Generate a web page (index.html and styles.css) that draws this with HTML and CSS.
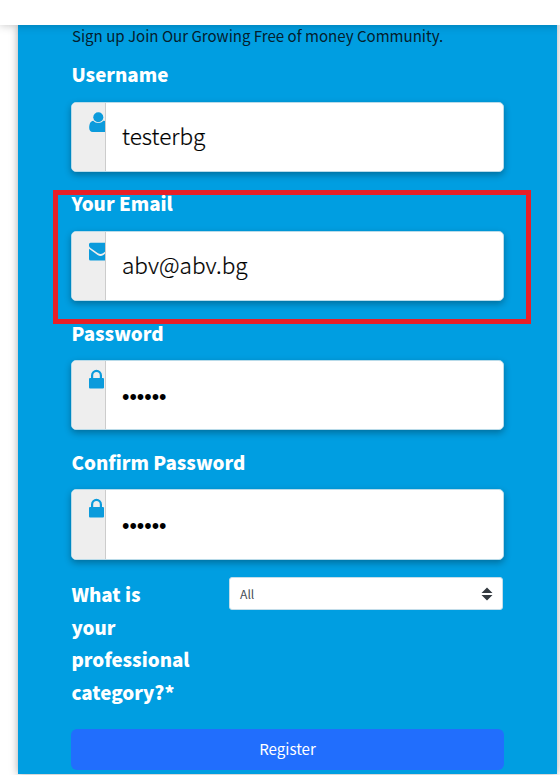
FILE: index.html
```html
<!DOCTYPE html>
<html lang="en">
<head>
<meta charset="utf-8">
<title>Register</title>
<link rel="stylesheet" href="styles.css">
</head>
<body>
<header class="topbar"></header>
<form class="panel">
  <p class="intro"><span>Sign up Join Our Growing Free of money Community.</span></p>
  <label class="label raised" for="user"><span>Username</span></label>
  <div class="field">
    <span class="addon"><svg class="icon" viewBox="0 0 18 20"><circle cx="9.3" cy="5.2" r="5"/><path d="M4.3 8.800C1.500 9 .2 12 .2 16c0 2.300 1.200 4 3.500 4H18V9.500C17 9 16 8.900 14.300 8.800 13 10.200 11.300 11 9.300 11S5.600 10.200 4.300 8.800z"/></svg></span>
    <input class="input" id="user" type="text" value="testerbg">
  </div>
  <label class="label raised" for="email"><span>Your Email</span></label>
  <div class="field">
    <span class="addon"><svg class="icon" viewBox="0 0 18 20"><path d="M0 3.300Q0 1.800 1.500 1.800H18V9.400L14 12.200Q11.500 13.800 9 12.200L1.500 7Q0 6 0 4.800z"/><path d="M0 7.800 8.600 14Q11.500 15.800 14.400 14L18 11.400V19.500H1.500Q0 19.500 0 18z"/></svg></span>
    <input class="input" id="email" type="text" value="abv@abv.bg">
  </div>
  <label class="label" for="pass"><span>Password</span></label>
  <div class="field">
    <span class="addon"><svg class="icon lock" viewBox="0 0 18 20"><path fill-rule="evenodd" d="M2 9V6.500a5.500 5.700 0 0 1 11 0V9H14q1 0 1 1v8.500q0 1-1 1H1q-1 0-1-1V10q0-1 1-1zM4.200 9h6.600V6.500a3.300 3.500 0 0 0-6.600 0z"/></svg></span>
    <input class="input secret" id="pass" type="password" value="abcdef">
  </div>
  <label class="label" for="confirm"><span>Confirm Password</span></label>
  <div class="field last">
    <span class="addon"><svg class="icon lock" viewBox="0 0 18 20"><path fill-rule="evenodd" d="M2 9V6.500a5.500 5.700 0 0 1 11 0V9H14q1 0 1 1v8.500q0 1-1 1H1q-1 0-1-1V10q0-1 1-1zM4.200 9h6.600V6.500a3.300 3.500 0 0 0-6.600 0z"/></svg></span>
    <input class="input secret" id="confirm" type="password" value="abcdef">
  </div>
  <div class="category">
    <label class="question" for="cat">What is<br>your<br>professional<br>category?*</label>
    <div class="select" id="cat"><span>All</span><svg class="arrows" viewBox="0 0 12 14"><path d="M6 .5 11.500 6H.5zM.5 8h11L6 13.500z"/></svg></div>
  </div>
  <button class="submit" type="button">Register</button>
</form>
<div class="highlight"></div>
</body>
</html>
```
FILE: styles.css
```css
* { box-sizing: border-box; }
body {
  margin: 0;
  height: 775px;
  overflow: hidden;
  background: #fff;
  color: #212529;
  font-family: "Noto Sans CJK SC", sans-serif;
}
.topbar {
  position: relative;
  height: 25px;
  background: #fff;
  box-shadow: 0 0 10px rgba(0, 0, 0, .25);
}
.panel {
  width: 539px;
  height: 749px;
  margin-left: 18px;
  padding: 0 53px;
  background: #009ee1;
  box-shadow: 0 0 8px rgba(0, 0, 0, .35);
}
.intro {
  margin: 0;
  height: 33px;
  padding-left: 1px;
  font-size: 15.07px;
  line-height: 21px;
  color: #05202d;
  white-space: nowrap;
}
.label {
  display: block;
  height: 44px;
  padding-left: .5px;
  color: #fff;
  font-size: 18.75px;
  font-weight: 900;
  line-height: 33px;
}
.raised { line-height: 31px; }
.field {
  display: flex;
  height: 70px;
  margin-bottom: 15px;
  border: 1px solid #b9dbe9;
  border-radius: 5px;
  overflow: hidden;
  background: #fff;
  box-shadow: 0 3px 7px rgba(0, 0, 0, .3);
}
.last { height: 71px; margin-bottom: 17px; }
.addon {
  display: flex;
  width: 34px;
  padding: 9px 0 0 17px;
  overflow: hidden;
  background: #eee;
  border-right: 1px solid #ccc;
}
.icon { flex: none; width: 18px; height: 20px; fill: #0b9bdc; }
.lock { margin-top: -1px; }
.input {
  flex: 1;
  min-width: 0;
  border: 0;
  padding: 0 16px 3px;
  background: transparent;
  color: #000;
  font-family: "Noto Sans CJK SC", sans-serif;
  font-size: 22.6px;
  font-weight: 300;
  -webkit-text-stroke: .2px #000;
}
.secret {
  padding: 3px 16px 0;
  font-family: "Liberation Sans", sans-serif;
  font-size: 21.2px;
  -webkit-text-stroke: 0;
}
.category { display: flex; height: 152px; padding-left: .5px; }
.question {
  width: 157.5px;
  padding-top: 1px;
  color: #fff;
  font-size: 18.75px;
  font-weight: 900;
  line-height: 32.6px;
}
.select {
  display: flex;
  align-items: center;
  justify-content: space-between;
  width: 274px;
  height: 33px;
  padding: 0 9px 0 10px;
  border: 1px solid #c3dde9;
  border-radius: 3px;
  background: #fff;
  color: #495057;
  font-size: 12.2px;
}
.arrows { width: 12px; height: 14px; fill: #343a40; }
.submit {
  display: block;
  width: 433px;
  height: 41px;
  border: 0;
  border-radius: 6px;
  padding: 0 0 3px;
  background: #216efd;
  color: #fff;
  font-family: "Noto Sans CJK SC", sans-serif;
  font-size: 15.1px;
}
.highlight {
  position: absolute;
  left: 53px;
  top: 190px;
  width: 478px;
  height: 134px;
  border: 5px solid #e81f27;
}
```
